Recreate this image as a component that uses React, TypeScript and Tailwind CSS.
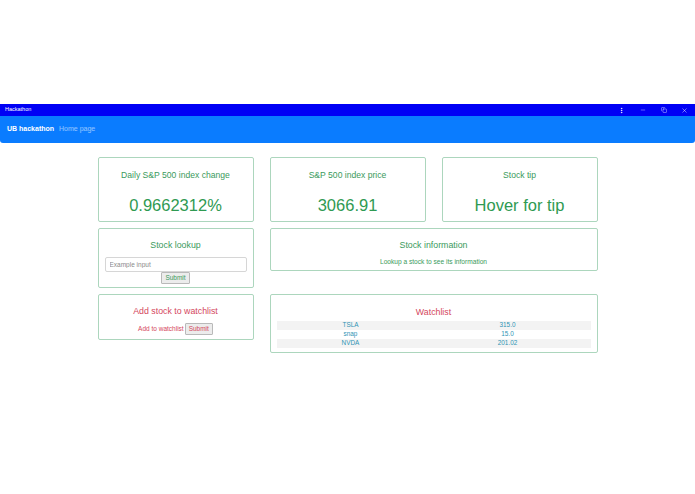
import { MoreVertical, Minus, Copy, X } from 'lucide-react';

const font = { fontFamily: '"Liberation Sans", Arial, sans-serif' };

function Card({ className, children }: { className?: string; children: React.ReactNode }) {
  return (
    <div className={`rounded-[2px] border border-[#acd6bd] bg-white text-center ${className ?? ''}`}>
      {children}
    </div>
  );
}

function StatCard({ title, value }: { title: string; value: string }) {
  return (
    <Card className="flex h-[65px] flex-col items-center pt-[11px]">
      <div className="text-[8.6px] leading-[12px] text-[#3a9a5c]">{title}</div>
      <div className="mt-[14px] text-[16.5px] leading-[20px] text-[#2f9a52]">{value}</div>
    </Card>
  );
}

export default function App() {
  const watchlist = [
    { symbol: 'TSLA', price: '315.0' },
    { symbol: 'snap', price: '15.0' },
    { symbol: 'NVDA', price: '201.02' },
  ];

  return (
    <div className="min-h-[494px] w-full bg-white pt-[104px]" style={font}>
      {/* Window title bar */}
      <div className="flex h-[12px] items-center justify-between bg-[#0000f5] pl-[5px] text-white">
        <span className="text-[5.5px] leading-none">Hackathon</span>
        <div className="flex h-full items-center">
          <span className="flex w-[21px] justify-center"><MoreVertical size={7} strokeWidth={2.5} /></span>
          <span className="flex w-[21px] justify-center"><Minus size={6} strokeWidth={1.5} /></span>
          <span className="flex w-[21px] justify-center"><Copy size={6} strokeWidth={1.5} /></span>
          <span className="flex w-[21px] justify-center"><X size={7} strokeWidth={1.5} /></span>
        </div>
      </div>

      {/* Navbar */}
      <nav className="flex h-[27px] items-center gap-[5px] rounded-b-[3px] bg-[#0a7cff] px-[7px]">
        <span className="text-[7px] font-bold text-white">UB hackathon</span>
        <span className="text-[7px] text-white/55">Home page</span>
      </nav>

      {/* Dashboard */}
      <div className="mx-auto mt-[14px] grid w-[500px] grid-cols-[156px_156px_156px] items-start gap-x-[16px] gap-y-[6px]">
        <StatCard title="Daily S&P 500 index change" value="0.9662312%" />
        <StatCard title="S&P 500 index price" value="3066.91" />
        <StatCard title="Stock tip" value="Hover for tip" />

        <Card className="flex h-[60px] flex-col items-center px-[6px] pt-[10px]">
          <div className="text-[8.8px] leading-[12px] text-[#3a9a5c]">Stock lookup</div>
          <input
            placeholder="Example input"
            className="mt-[6px] h-[15px] w-full rounded-[2px] border border-[#d6d6d6] px-[4px] text-[6.5px] text-gray-700 outline-none placeholder:text-[#8a8a8a]"
          />
          <button className="h-[12px] rounded-[1px] border border-[#b9b9b9] bg-[#ececec] px-[3px] text-[6.5px] leading-none text-[#3a9a5c]">
            Submit
          </button>
        </Card>

        <Card className="col-span-2 flex h-[43px] flex-col items-center pt-[10px]">
          <div className="text-[8.8px] leading-[12px] text-[#3a9a5c]">Stock information</div>
          <div className="mt-[6px] text-[6.6px] leading-[10px] text-[#3a9a5c]">Lookup a stock to see its information</div>
        </Card>

        <Card className="flex h-[46px] flex-col items-center pt-[10px]">
          <div className="text-[8.8px] leading-[12px] text-[#d4475d]">Add stock to watchlist</div>
          <div className="mt-[6px] flex items-center gap-[1px]">
            <span className="text-[6.5px] text-[#d4475d]">Add to watchlist</span>
            <button className="h-[12px] rounded-[1px] border border-[#b9b9b9] bg-[#ececec] px-[3px] text-[6.5px] leading-none text-[#d4475d]">
              Submit
            </button>
          </div>
        </Card>

        <Card className="col-span-2 flex h-[59px] flex-col items-center px-[6px] pt-[11px]">
          <div className="text-[8.8px] leading-[12px] text-[#d4475d]">Watchlist</div>
          <div className="mt-[3px] w-full">
            {watchlist.map((row, i) => (
              <div
                key={row.symbol}
                className={`grid h-[9px] grid-cols-[148px_1fr] items-center text-[6.4px] leading-none text-[#2e93b4] ${i % 2 === 0 ? 'bg-[#f3f3f3]' : 'bg-white'}`}
              >
                <span>{row.symbol}</span>
                <span>{row.price}</span>
              </div>
            ))}
          </div>
        </Card>
      </div>
    </div>
  );
}
